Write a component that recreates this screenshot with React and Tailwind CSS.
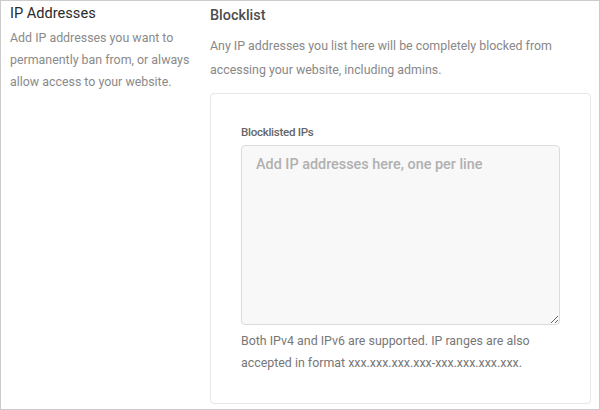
export default function App() {
  return (
    <div
      className="w-[600px] h-[410px] border border-[#cccccc] bg-white flex"
      style={{ fontFamily: "Roboto, 'Liberation Sans', sans-serif" }}
    >
      <div className="w-[209px] shrink-0 pl-[9px] pr-[12px] pt-[2px]">
        <h2 className="text-[14.6px] leading-[20px] text-[#2b2b2b]">IP Addresses</h2>
        <p className="mt-[4px] text-[12.4px] leading-[22px] text-[#8a8a8a]">
          Add IP addresses you want to permanently ban from, or always allow access to your website.
        </p>
      </div>
      <div className="flex-1 pr-[8px] pt-[5px]">
        <h3 className="text-[14.4px] leading-[20px] font-medium text-[#4d4d4d]">Blocklist</h3>
        <p className="mt-[8px] text-[12.4px] leading-[24px] text-[#888888]">
          Any IP addresses you list here will be completely blocked from accessing your website, including admins.
        </p>
        <div className="mt-[11px] border border-[#e6e6e6] rounded-[4px] px-[30px] pt-[30px] pb-[29px]">
          <label className="block text-[11.6px] leading-[16px] font-medium text-[#666666] tracking-[-0.3px]">
            Blocklisted IPs
          </label>
          <textarea
            className="mt-[5px] block w-full h-[180px] bg-[#f8f8f8] border border-[#dcdcdc] rounded-[4px] px-[14px] py-[7px] text-[14.4px] leading-[24px] font-medium text-[#444] placeholder:text-[#b0b0b0] outline-none"
            placeholder="Add IP addresses here, one per line"
          />
          <p className="mt-[5px] text-[12.4px] leading-[22px] text-[#777777]">
            Both IPv4 and IPv6 are supported. IP ranges are also accepted in format xxx.xxx.xxx.xxx-xxx.xxx.xxx.xxx.
          </p>
        </div>
      </div>
    </div>
  );
}
